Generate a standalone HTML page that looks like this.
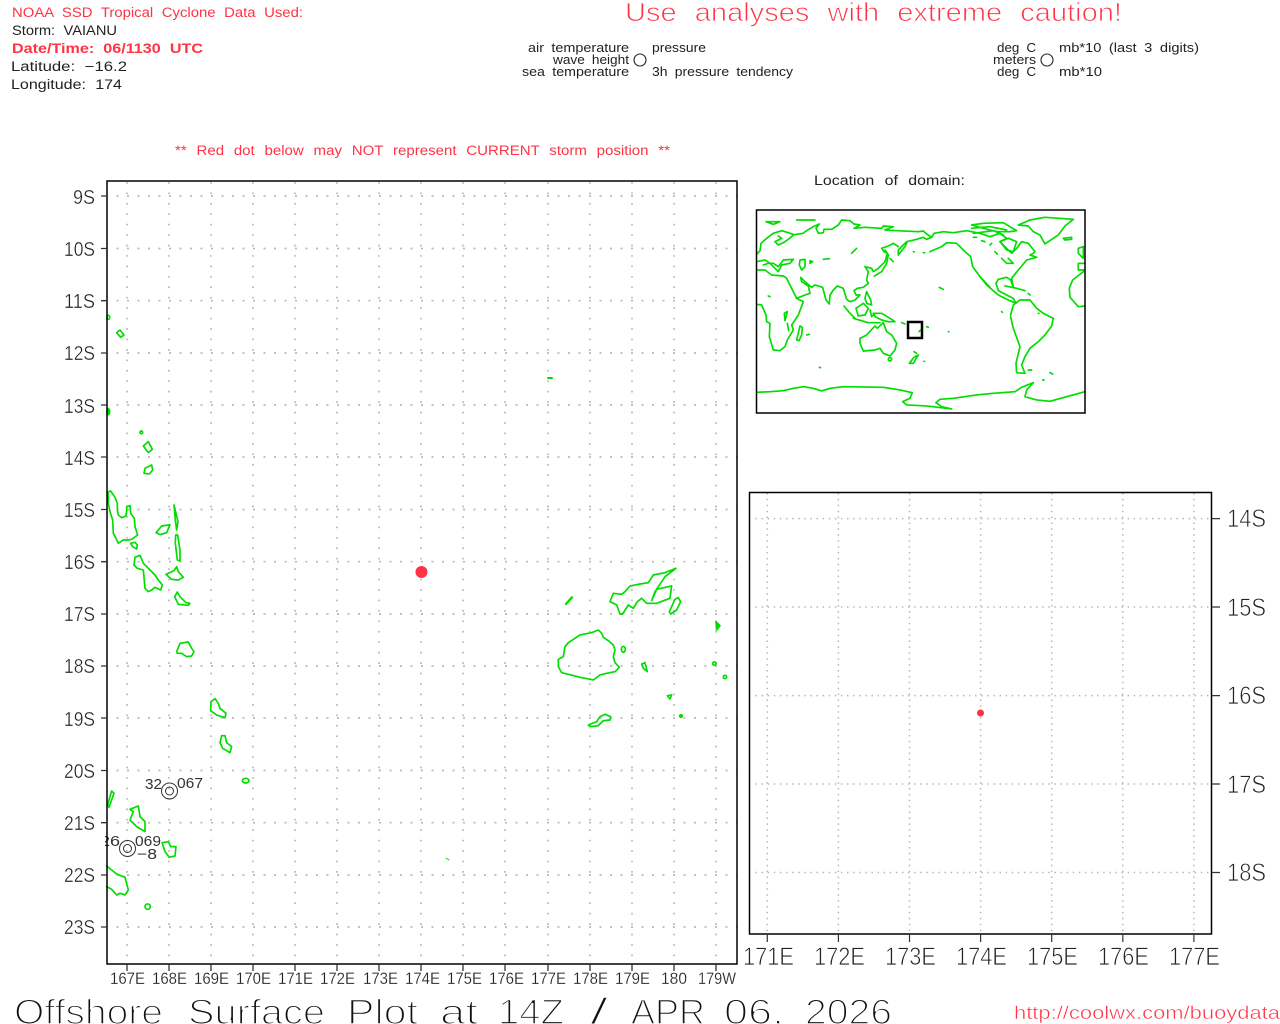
<!DOCTYPE html>
<html><head><meta charset="utf-8"><title>Offshore Surface Plot</title>
<style>
html,body{margin:0;padding:0;background:#fff}
svg{display:block}
text{font-family:"Liberation Sans",sans-serif}
.r{fill:#ff3344}
.k{fill:#222}
.c{fill:none;stroke:#00dd00;stroke-linejoin:round;stroke-linecap:round}
</style></head><body>
<svg width="1280" height="1024" viewBox="0 0 1280 1024" xmlns="http://www.w3.org/2000/svg">
<rect width="1280" height="1024" fill="#fff"/>

<!-- header -->
<g style="word-spacing:4px" font-size="13.500">
<text class="r" x="12" y="17" textLength="291" lengthAdjust="spacingAndGlyphs">NOAA SSD Tropical Cyclone Data Used:</text>
<text class="k" x="12" y="35" textLength="105" lengthAdjust="spacingAndGlyphs">Storm: VAIANU</text>
<text class="r" x="12" y="53" font-size="14" font-weight="bold" textLength="191" lengthAdjust="spacingAndGlyphs">Date/Time: 06/1130 UTC</text>
<text class="k" x="11" y="71" textLength="116" lengthAdjust="spacingAndGlyphs">Latitude: −16.2</text>
<text class="k" x="11" y="89" textLength="111" lengthAdjust="spacingAndGlyphs">Longitude: 174</text>
</g>
<text class="r" x="625" y="21" font-size="26" style="word-spacing:9px" textLength="497" lengthAdjust="spacingAndGlyphs" stroke="#fff" stroke-width=".8">Use analyses with extreme caution!</text>

<g class="k" font-size="12.500" style="word-spacing:3px">
<text x="528" y="52" textLength="101" lengthAdjust="spacingAndGlyphs">air temperature</text>
<text x="553" y="64" textLength="76" lengthAdjust="spacingAndGlyphs">wave height</text>
<text x="522" y="76" textLength="107" lengthAdjust="spacingAndGlyphs">sea temperature</text>
<text x="652" y="52" textLength="54" lengthAdjust="spacingAndGlyphs">pressure</text>
<text x="652" y="76" textLength="141" lengthAdjust="spacingAndGlyphs">3h pressure tendency</text>
<text x="997" y="52" textLength="39" lengthAdjust="spacingAndGlyphs">deg C</text>
<text x="993" y="64" textLength="43" lengthAdjust="spacingAndGlyphs">meters</text>
<text x="997" y="76" textLength="39" lengthAdjust="spacingAndGlyphs">deg C</text>
<text x="1059" y="52" textLength="140" lengthAdjust="spacingAndGlyphs">mb*10 (last 3 digits)</text>
<text x="1059" y="76" textLength="43" lengthAdjust="spacingAndGlyphs">mb*10</text>
</g>
<circle cx="640" cy="60" r="6" fill="none" stroke="#222" stroke-width="1.100"/>
<circle cx="1047" cy="60" r="6" fill="none" stroke="#222" stroke-width="1.100"/>

<text class="r" x="175" y="155" font-size="13.500" style="word-spacing:5px" textLength="495" lengthAdjust="spacingAndGlyphs">** Red dot below may NOT represent CURRENT storm position **</text>
<text class="k" x="814" y="185" font-size="13.500" style="word-spacing:5px" textLength="151" lengthAdjust="spacingAndGlyphs">Location of domain:</text>

<!-- left plot grid -->
<path fill="none" stroke="#b8b8b8" stroke-width="1.700" stroke-dasharray="1.700 8.740" d="M127,182V964M169,182V964M211,182V964M253,182V964M295,182V964M337,182V964M379,182V964M421,182V964M463,182V964M505,182V964M548,182V964M590,182V964M632,182V964M674,182V964M716,182V964"/>
<path fill="none" stroke="#b8b8b8" stroke-width="1.700" stroke-dasharray="2 8.500" d="M116.500,196H737M116.500,248.500H737M116.500,300.700H737M116.500,353H737M116.500,405H737M116.500,457H737M116.500,509.500H737M116.500,561.700H737M116.500,614H737M116.500,666H737M116.500,718H737M116.500,770.500H737M116.500,822.700H737M116.500,875H737M116.500,927H737"/>

<!-- left plot coast -->
<g transform="translate(100,480) scale(.3333)" class="c" stroke-width="5">
<path d="M25,35L32,33L38,42L45,52L52,70L52,90L55,105L65,113L78,108L80,92L80,80L90,77L92,100L103,115L105,140L113,165L95,178L85,180L70,180L55,190L48,175L40,160L38,120L30,95L25,70Z"/>
<path d="M92,190L105,187L112,195L110,207L98,200Z"/>
<path d="M105,232L120,226L130,250L150,270L165,285L175,300L187,315L182,330L165,322L155,330L145,335L135,325L130,270L112,265L102,255Z"/>
<path d="M168,158L185,138L210,134L200,158L180,164Z"/>
<path d="M222,75L228,100L234,125L230,150L226,120Z"/>
<path d="M227,165L233,165L240,210L240,243L232,240L226,190Z"/>
<path d="M198,283L222,272L230,260L235,275L250,292L235,300L215,298Z"/>
<path d="M232,336L240,350L258,368L270,370L265,376L235,373L224,350Z"/>
</g>
<g transform="translate(100,620) scale(.3333)" class="c" stroke-width="5">
<path d="M230,95L240,70L265,66L275,85L282,95L275,108L260,110L245,100L232,100Z"/>
<path d="M333,245L345,236L355,250L360,265L378,280L375,293L350,285L332,272Z"/>
<path d="M365,347L375,347L380,368L395,380L390,398L368,385L360,368Z"/>
<ellipse cx="437" cy="482" rx="10" ry="7"/>
<path d="M23,555L30,530L35,513L42,520L33,545L27,562Z"/>
<path d="M90,568L115,558L120,590L135,605L135,635L110,620L90,600L100,575Z"/>
<path d="M186,668L205,665L212,680L228,680L225,708L208,712L195,695Z"/>
<path d="M20,738L50,762L75,772L85,810L75,825L60,820L50,825L35,808L20,800"/>
<ellipse cx="143" cy="860" rx="8" ry="8"/>
</g>
<g transform="translate(100,300) scale(.3333)" class="c" stroke-width="5">
<ellipse cx="25" cy="52" rx="4" ry="6"/>
<path d="M50,98L60,90L72,105L62,112Z"/>
<ellipse cx="25" cy="335" rx="4" ry="9" fill="#00dd00"/>
<circle cx="124" cy="397" r="4"/>
<path d="M130,438L145,425L157,448L145,458Z"/>
<path d="M135,505L155,495L158,510L148,522L132,520Z"/>
</g>
<g transform="translate(550,560) scale(.3333)" class="c" stroke-width="5">
<path d="M25,298L40,290L45,260L55,248L75,235L90,225L105,222L125,218L145,210L155,220L160,232L175,242L190,255L195,270L190,290L195,308L208,322L195,335L170,340L150,345L130,360L90,352L60,344L35,338L25,320Z"/>
<path d="M378,25L345,38L310,45L295,68L270,72L240,78L225,95L215,103L190,100L180,125L200,135L210,162L218,162L235,135L250,145L262,125L275,115L290,130L320,130L360,115L365,78L320,88L305,122L315,95L345,50Z"/>
<path d="M385,113L392,125L380,150L362,162L358,155L375,118Z"/>
<path d="M48,132L66,112" stroke-width="7"/>
<ellipse cx="220" cy="268" rx="6" ry="9"/>
<path d="M275,312L285,308L292,335L280,325Z"/>
<path d="M352,407L365,405L360,417Z"/>
<circle cx="393" cy="468" r="4" fill="#00dd00"/>
<path d="M115,495L140,485L150,470L165,463L182,470L180,480L160,482L145,497L120,500Z"/>
<path d="M498,185L510,197L500,210Z" fill="#00dd00"/>
<circle cx="493" cy="311" r="5"/>
<circle cx="525" cy="351" r="5"/>
</g>
<path class="c" stroke-width="2" d="M548,378H552"/>
<path class="c" stroke-width="1" d="M446,858L449,860"/>

<!-- stations -->
<svg x="105" y="181" width="632" height="783" viewBox="105 181 632 783">
<g fill="none" stroke="#333" stroke-width="1">
<circle cx="169.500" cy="791" r="8"/><circle cx="169.500" cy="791" r="4"/>
<circle cx="127.500" cy="848.500" r="8"/><circle cx="127.500" cy="848.500" r="4"/>
</g>
<g fill="#333" font-size="14.500">
<text x="145" y="789" textLength="17" lengthAdjust="spacingAndGlyphs">32</text>
<text x="177" y="788" textLength="26" lengthAdjust="spacingAndGlyphs">067</text>
<text x="100" y="846" textLength="20" lengthAdjust="spacingAndGlyphs">26</text>
<text x="135" y="846" textLength="26" lengthAdjust="spacingAndGlyphs">069</text>
<text x="137" y="859" textLength="20" lengthAdjust="spacingAndGlyphs">−8</text>
</g>
</svg>

<circle cx="421.500" cy="572" r="6" fill="#ff3344"/>

<!-- left plot frame -->
<rect x="107" y="181" width="630" height="783" fill="none" stroke="#000" stroke-width="1.500"/>
<path stroke="#333" stroke-width="1.300" fill="none" d="M101,196H107M101,248.500H107M101,300.700H107M101,353H107M101,405H107M101,457H107M101,509.500H107M101,561.700H107M101,614H107M101,666H107M101,718H107M101,770.500H107M101,822.700H107M101,875H107M101,927H107M127,964V971M169,964V971M211,964V971M253,964V971M295,964V971M337,964V971M379,964V971M421,964V971M463,964V971M505,964V971M548,964V971M590,964V971M632,964V971M674,964V971M716,964V971"/>

<g class="k" font-size="20" stroke="#fff" stroke-width=".35">
<text x="73" y="204" textLength="22" lengthAdjust="spacingAndGlyphs">9S</text>
<text x="64" y="256" textLength="31" lengthAdjust="spacingAndGlyphs">10S</text>
<text x="64" y="308" textLength="31" lengthAdjust="spacingAndGlyphs">11S</text>
<text x="64" y="360" textLength="31" lengthAdjust="spacingAndGlyphs">12S</text>
<text x="64" y="413" textLength="31" lengthAdjust="spacingAndGlyphs">13S</text>
<text x="64" y="465" textLength="31" lengthAdjust="spacingAndGlyphs">14S</text>
<text x="64" y="517" textLength="31" lengthAdjust="spacingAndGlyphs">15S</text>
<text x="64" y="569" textLength="31" lengthAdjust="spacingAndGlyphs">16S</text>
<text x="64" y="621" textLength="31" lengthAdjust="spacingAndGlyphs">17S</text>
<text x="64" y="673" textLength="31" lengthAdjust="spacingAndGlyphs">18S</text>
<text x="64" y="726" textLength="31" lengthAdjust="spacingAndGlyphs">19S</text>
<text x="64" y="778" textLength="31" lengthAdjust="spacingAndGlyphs">20S</text>
<text x="64" y="830" textLength="31" lengthAdjust="spacingAndGlyphs">21S</text>
<text x="64" y="882" textLength="31" lengthAdjust="spacingAndGlyphs">22S</text>
<text x="64" y="934" textLength="31" lengthAdjust="spacingAndGlyphs">23S</text>
</g>
<g class="k" font-size="17" stroke="#fff" stroke-width=".2">
<text x="110" y="984" textLength="35" lengthAdjust="spacingAndGlyphs">167E</text>
<text x="152" y="984" textLength="35" lengthAdjust="spacingAndGlyphs">168E</text>
<text x="194" y="984" textLength="35" lengthAdjust="spacingAndGlyphs">169E</text>
<text x="236" y="984" textLength="35" lengthAdjust="spacingAndGlyphs">170E</text>
<text x="278" y="984" textLength="35" lengthAdjust="spacingAndGlyphs">171E</text>
<text x="320" y="984" textLength="35" lengthAdjust="spacingAndGlyphs">172E</text>
<text x="363" y="984" textLength="35" lengthAdjust="spacingAndGlyphs">173E</text>
<text x="405" y="984" textLength="35" lengthAdjust="spacingAndGlyphs">174E</text>
<text x="447" y="984" textLength="35" lengthAdjust="spacingAndGlyphs">175E</text>
<text x="489" y="984" textLength="35" lengthAdjust="spacingAndGlyphs">176E</text>
<text x="531" y="984" textLength="35" lengthAdjust="spacingAndGlyphs">177E</text>
<text x="573" y="984" textLength="35" lengthAdjust="spacingAndGlyphs">178E</text>
<text x="615" y="984" textLength="35" lengthAdjust="spacingAndGlyphs">179E</text>
<text x="661" y="984" textLength="26" lengthAdjust="spacingAndGlyphs">180</text>
<text x="698" y="984" textLength="38" lengthAdjust="spacingAndGlyphs">179W</text>
</g>

<!-- inset -->
<g transform="translate(750,200) scale(.3333)" class="c" stroke-width="5">
<!-- eurasia -->
<path d="M20,163L30,152L33,130L50,115L70,100L95,92L115,98L132,104L115,118L100,128L85,135L75,125L95,115L85,108M132,104L160,100L165,95L190,80L208,72L198,85L205,100L220,98L222,88L245,88L265,75L275,60L300,62L312,72L330,75L312,85L345,82L395,85L400,78L430,80L405,90L440,92L505,95L520,93L530,102L545,112L530,118L520,112L500,118L470,125L460,135L445,150L445,165L465,140L472,125M445,140L430,130L415,138L395,145L402,155L412,160L405,185L385,205L370,215L365,205L345,200L355,215L350,240L355,250L340,262L322,265L312,272L318,285L330,285L315,300L300,305L290,298L280,265L262,258L250,270L240,285L238,312L228,300L218,262L195,255L185,262L165,245L152,232L155,245L175,258L180,280L165,285L140,295L125,265L110,235L100,228L65,225L45,210L20,210"/>
<path d="M20,185L45,180L60,190L75,205L85,215L95,195L120,190L130,178L100,180L85,200L70,190L55,190L40,195M150,180L165,178L165,200L155,210L148,195ZM180,182L188,185L180,190ZM220,178L238,176M305,160L320,145M48,65L90,65L70,73ZM140,60L195,60"/>
<path d="M373,228L395,215L410,190L415,165L405,150M490,155L493,155M520,158L524,158M430,185L420,175"/>
<!-- africa -->
<path d="M20,313L35,315L48,345L50,365L60,370L58,410L70,450L90,452L105,440L112,420L130,390L125,375L145,345L160,305L140,295"/>
<path d="M140,420L150,378L157,382L155,405L147,422ZM170,405L178,403M103,340L112,335L105,362ZM112,370L116,392M55,288L60,290M208,502L212,503"/>
<!-- SE Asia islands -->
<path d="M282,318L300,340L315,355M310,355L355,368L390,368M318,325L340,310L355,325L345,345L325,348ZM360,330L365,350L375,340M350,275L362,300L365,315L350,310L345,295ZM370,340L395,340L420,355L435,365L415,365L395,360L375,350ZM455,368L465,372"/>
<!-- australia -->
<path d="M330,415L350,405L375,378L382,385L400,368L410,395L425,405L440,430L435,450L420,468L400,460L390,445L375,450L340,453L330,430Z"/>
<ellipse cx="420" cy="478" rx="5" ry="5"/>
<!-- NZ -->
<path d="M478,490L492,472L505,465L490,490ZM492,455L500,460M522,484L524,484"/>
<path d="M568,262L580,268M535,382L530,380M595,395L597,395M507,395L512,390"/>
<!-- N america -->
<path d="M545,112L552,100L580,95L610,98L650,92L690,100L720,110L750,100L770,115L750,125L770,145L785,160L800,145L815,125L835,130L855,155L850,160L840,165L860,172L830,180L805,210L785,235L790,262L782,240L770,232L745,238L738,250L745,272L770,285L790,295L798,310L775,300L745,285L710,255L690,230L668,200L662,170L640,150L620,130L590,128L575,140L540,155"/>
<path d="M690,230L720,262M765,258L800,265L825,272M835,280L840,285"/>
<path d="M665,75L700,70L760,68L780,80L800,92L780,95L740,95L700,85ZM665,85L720,80L770,90M670,100L730,92L760,105M670,112L680,112M695,122L705,125M720,135L725,130M735,155L742,162M755,175L770,190L790,190L775,175M750,125L775,115L800,125L790,155L770,150ZM985,145L1000,140L1000,175L985,160Z"/>
<path d="M805,75L840,60L885,52L970,58L945,78L925,105L885,132L870,105L850,95L835,78Z"/>
<path d="M940,115L965,112L965,118L945,120Z"/>
<!-- S america -->
<path d="M782,345L790,315L810,300L840,300L860,325L880,340L910,355L905,378L885,405L865,425L840,445L825,470L815,495L825,520L800,518L798,490L810,440L790,385L782,350"/>
<path d="M835,510L845,510M878,540L882,540M900,518L908,522M755,335L757,337M865,340L867,340"/>
<!-- right side europe/africa -->
<path d="M1005,318L985,320L960,292L958,265L968,240L1000,215M1003,210H985V190H1003"/>
<!-- antarctica -->
<path d="M20,577L60,575L100,572L130,565L160,560L190,565L215,573L240,565L280,560L400,562L450,570L487,578L480,595L458,605L470,615L530,618L605,627L575,620L558,608L570,598L610,595L680,585L730,580L795,575L815,562L850,548L830,570L825,590L860,600L900,604L950,590L1005,575"/>
</g>
<rect x="908" y="322" width="14" height="16" fill="none" stroke="#000" stroke-width="2.500"/>
<rect x="756.500" y="210" width="328.500" height="203" fill="none" stroke="#000" stroke-width="1.500"/>

<!-- right plot -->
<path fill="none" stroke="#b8b8b8" stroke-width="1.500" stroke-dasharray="1.500 4.400" d="M767.300,493V934M838.400,493V934M909.500,493V934M980.600,493V934M1051.700,493V934M1122.800,493V934M1193.900,493V934"/>
<path fill="none" stroke="#b8b8b8" stroke-width="1.500" stroke-dasharray="1.500 4.600" d="M755.500,518.600H1212M755.500,607H1212M755.500,695.600H1212M755.500,784H1212M755.500,872.500H1212"/>
<circle cx="980.500" cy="713" r="3.500" fill="#ff3344"/>
<rect x="749.500" y="492.500" width="462" height="441.500" fill="none" stroke="#000" stroke-width="1.500"/>
<path stroke="#333" stroke-width="1.200" fill="none" d="M767.300,934V942M838.400,934V942M909.500,934V942M980.600,934V942M1051.700,934V942M1122.800,934V942M1193.900,934V942M1212,518.600H1220M1212,607H1220M1212,695.600H1220M1212,784H1220M1212,872.500H1220"/>
<g class="k" font-size="25" stroke="#fff" stroke-width=".7">
<text x="743" y="965" textLength="51" lengthAdjust="spacingAndGlyphs">171E</text>
<text x="814" y="965" textLength="51" lengthAdjust="spacingAndGlyphs">172E</text>
<text x="885" y="965" textLength="51" lengthAdjust="spacingAndGlyphs">173E</text>
<text x="956" y="965" textLength="51" lengthAdjust="spacingAndGlyphs">174E</text>
<text x="1027" y="965" textLength="51" lengthAdjust="spacingAndGlyphs">175E</text>
<text x="1098" y="965" textLength="51" lengthAdjust="spacingAndGlyphs">176E</text>
<text x="1169" y="965" textLength="51" lengthAdjust="spacingAndGlyphs">177E</text>
<text x="1227" y="527" textLength="39" lengthAdjust="spacingAndGlyphs">14S</text>
<text x="1227" y="616" textLength="39" lengthAdjust="spacingAndGlyphs">15S</text>
<text x="1227" y="704" textLength="39" lengthAdjust="spacingAndGlyphs">16S</text>
<text x="1227" y="793" textLength="39" lengthAdjust="spacingAndGlyphs">17S</text>
<text x="1227" y="881" textLength="39" lengthAdjust="spacingAndGlyphs">18S</text>
</g>

<!-- footer -->
<g font-size="35" fill="#111" stroke="#fff" stroke-width="1.600">
<text x="14" y="1024" textLength="149" lengthAdjust="spacingAndGlyphs">Offshore</text>
<text x="188" y="1024" textLength="137" lengthAdjust="spacingAndGlyphs">Surface</text>
<text x="347" y="1024" textLength="71" lengthAdjust="spacingAndGlyphs">Plot</text>
<text x="440" y="1024" textLength="38" lengthAdjust="spacingAndGlyphs">at</text>
<text x="498" y="1024" textLength="66" lengthAdjust="spacingAndGlyphs">14Z</text>
<text x="631" y="1024" textLength="74" lengthAdjust="spacingAndGlyphs">APR</text>
<text x="724" y="1024" textLength="60" lengthAdjust="spacingAndGlyphs">06,</text>
<text x="805" y="1024" textLength="87" lengthAdjust="spacingAndGlyphs">2026</text>
<text x="590" y="1024" stroke-width="1.400" font-size="37" textLength="18" lengthAdjust="spacingAndGlyphs">/</text>
</g>
<text class="r" x="1014" y="1019" font-size="18.500" stroke="#fff" stroke-width=".45" textLength="266" lengthAdjust="spacingAndGlyphs">http://coolwx.com/buoydata</text>
</svg>
</body></html>
